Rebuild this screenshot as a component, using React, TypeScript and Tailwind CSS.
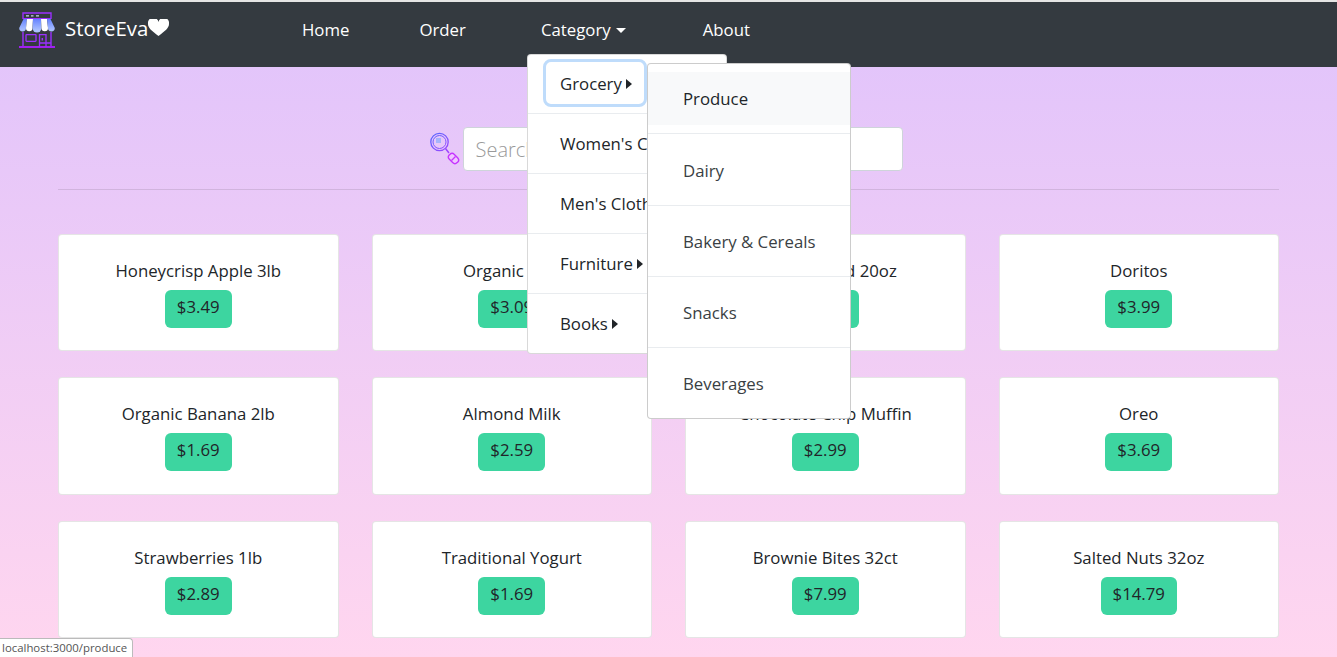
const rows = [
  [
    { name: "Honeycrisp Apple 3lb", price: "$3.49" },
    { name: "Organic Milk", price: "$3.09" },
    { name: "Wheat Bread 20oz", price: "$2.99" },
    { name: "Doritos", price: "$3.99" },
  ],
  [
    { name: "Organic Banana 2lb", price: "$1.69" },
    { name: "Almond Milk", price: "$2.59" },
    { name: "Chocolate Chip Muffin", price: "$2.99" },
    { name: "Oreo", price: "$3.69" },
  ],
  [
    { name: "Strawberries 1lb", price: "$2.89" },
    { name: "Traditional Yogurt", price: "$1.69" },
    { name: "Brownie Bites 32ct", price: "$7.99" },
    { name: "Salted Nuts 32oz", price: "$14.79" },
  ],
];

const categories = ["Women's Clothing", "Men's Clothing", "Furniture", "Books"];

const subItems = ["Dairy", "Bakery & Cereals", "Snacks", "Beverages"];

function Arrow() {
  return <span className="ml-1 inline-block border-y-[5px] border-l-[6px] border-y-transparent border-l-[#212529]" />;
}

function StoreLogo() {
  return (
    <svg width="36" height="36" viewBox="0 0 36 36" fill="none" className="shrink-0">
      <defs>
        <linearGradient id="awning" x1="0" y1="6" x2="0" y2="18" gradientUnits="userSpaceOnUse">
          <stop offset="0" stopColor="#5f7dff" />
          <stop offset="1" stopColor="#a9c0ff" />
        </linearGradient>
      </defs>
      <path d="M4 7V1h28v6" stroke="#9b30ff" strokeWidth="1.4" />
      <path d="M4 6.500h28" stroke="#9b30ff" strokeWidth="1" />
      <path d="M7 3.800h3M12 3.800h2.500M17 3.800h3" stroke="#c9cfe8" strokeWidth="1.200" />
      <path d="M4.500 7h3.500l-1 9a3.400 3.400 0 0 1-6.800 0z" fill="url(#awning)" />
      <path d="M8 7h6l-.5 9a3.200 3.200 0 0 1-6.500 0z" fill="#fff" />
      <path d="M14 7h8l.5 9a4.200 4.200 0 0 1-9 0z" fill="url(#awning)" />
      <path d="M22 7h6l1 9a3.200 3.200 0 0 1-6.500 0z" fill="#fff" />
      <path d="M28 7h3.500l4.300 9a3.400 3.400 0 0 1-6.800 0z" fill="url(#awning)" />
      <path d="M4 20v15M32 20v15" stroke="#9b30ff" strokeWidth="1.400" />
      <path d="M0 35h36" stroke="#a020f0" strokeWidth="1.800" />
      <rect x="7" y="22.700" width="10" height="6.600" rx="0.500" stroke="#9b30ff" strokeWidth="1.300" />
      <path d="M20.500 35V22.700h6.500V35M20.500 31h11.500" stroke="#9b30ff" strokeWidth="1.300" />
      <path d="M23.300 26v2.500" stroke="#9b30ff" strokeWidth="1.500" />
    </svg>
  );
}

function SearchLogo() {
  return (
    <svg width="30" height="34" viewBox="0 0 30 34" fill="none" className="shrink-0">
      <defs>
        <linearGradient id="glass" x1="0" y1="0" x2="28" y2="32" gradientUnits="userSpaceOnUse">
          <stop offset="0" stopColor="#4f6bff" />
          <stop offset="1" stopColor="#d02cff" />
        </linearGradient>
      </defs>
      <circle cx="9.500" cy="10" r="8.700" stroke="url(#glass)" strokeWidth="1.300" />
      <circle cx="9.500" cy="10" r="6.500" stroke="url(#glass)" strokeWidth="1" />
      <rect x="6" y="6" width="5" height="5" fill="#a5b4fc" />
      <path d="M15.500 16.500l3.500 4.500" stroke="url(#glass)" strokeWidth="1.500" />
      <rect x="-5.500" y="-3.500" width="11" height="7" rx="3.200" transform="translate(23.500 26.500) rotate(45)" fill="#efc6ff" stroke="#c635ff" strokeWidth="1.400" />
      <path d="M21.500 28.500l4-4" stroke="#c635ff" strokeWidth="1.200" />
    </svg>
  );
}

function ProductCard({ name, price }: { name: string; price: string }) {
  return (
    <div className="flex h-[117.3px] flex-col items-center rounded border border-black/10 bg-white pt-[24px]">
      <div className="text-[16.8px] leading-[24px] text-[#212529]">{name}</div>
      <div className="mt-[7px] rounded-md bg-[#3dd5a0] px-3 pb-[8px] pt-[4px] text-[16.8px] leading-[26px] text-[#212529]">
        {price}
      </div>
    </div>
  );
}

export default function App() {
  return (
    <div className="relative h-[657px] overflow-hidden bg-[linear-gradient(#e0c3fc,#ffd6ef)] font-['Open_Sans',sans-serif]">
      <nav className="relative flex h-[67px] border-t-2 border-[#e5e5e5] bg-[#343a40] text-white">
        <div className="ml-[19px] flex items-start pt-[10px]">
          <StoreLogo />
          <span className="ml-[10px] mt-[1px] text-[20.400px] leading-[30px]">StoreEva</span>
          <svg width="21" height="17" viewBox="0 0 21 17" className="mt-[7px]">
            <path d="M10.500 17C4 12 0 9 0 5a5 5 0 0 1 10.500-2A5 5 0 0 1 21 5c0 4-4 7-10.500 12z" fill="#fff" />
          </svg>
        </div>
        <div className="absolute left-[302px] top-[15px] flex items-center text-[16.800px] leading-[26px]">
          <span>Home</span>
          <span className="ml-[70px]">Order</span>
          <span className="ml-[75px] flex items-center gap-[5px]">
            Category
            <span className="border-x-[5px] border-t-[5px] border-x-transparent border-t-white" />
          </span>
          <span className="ml-[77px]">About</span>
        </div>
      </nav>

      <main className="px-[58px] pt-[60px]">
        <div className="flex items-center justify-center pr-[5px]">
          <SearchLogo />
          <input
            placeholder="Search"
            className="ml-[3px] h-[44px] w-[440px] rounded border border-[#ced4da] bg-white px-3 text-[20px] font-light placeholder:text-[#9a9a9a]"
          />
        </div>
        <hr className="mt-[18px] border-black/10" />
        <div className="mt-[44px] flex flex-col gap-[26px]">
          {rows.map((row, i) => (
            <div key={i} className="grid grid-cols-4 gap-[33px]">
              {row.map((item) => (
                <ProductCard key={item.name} {...item} />
              ))}
            </div>
          ))}
        </div>
      </main>

      <div className="absolute left-[527px] top-[54px] h-[300px] w-[200px] rounded border border-black/15 bg-white text-[16.800px] text-[#212529]">
        <div className="flex h-[58px] items-start pl-[15px] pt-[4px]">
          <div className="flex h-[48px] w-[104px] items-center rounded-lg border-[3px] border-[#bfdcfb] pl-[14px] pt-[2px]">
            Grocery
            <Arrow />
          </div>
        </div>
        {categories.map((c) => (
          <div key={c} className="flex h-[60px] items-center whitespace-nowrap border-t border-[#e9ecef] pl-[32px]">
            {c}
            <Arrow />
          </div>
        ))}
      </div>

      <div className="absolute left-[647px] top-[63px] h-[356px] w-[204px] rounded border border-black/20 bg-white pt-[8px] text-[16.800px] text-[#212529]">
        <div className="mb-[8px] flex h-[53px] items-center bg-[#f8f9fa] pl-[35px]">Produce</div>
        {subItems.map((s, i) => (
          <div
            key={s}
            className={`flex items-center border-t border-[#e9ecef] pl-[35px] text-[#3a3f44] ${i === 0 ? "h-[72px] pt-[3px]" : "h-[71px] pt-[2px]"}`}
          >
            {s}
          </div>
        ))}
      </div>

      <div className="absolute bottom-0 left-0 flex h-[19px] items-center rounded-tr border-r border-t border-[#bbb] bg-white pl-[2px] pr-[5px] text-[11.400px] text-[#555]">
        localhost:3000/produce
      </div>
    </div>
  );
}
